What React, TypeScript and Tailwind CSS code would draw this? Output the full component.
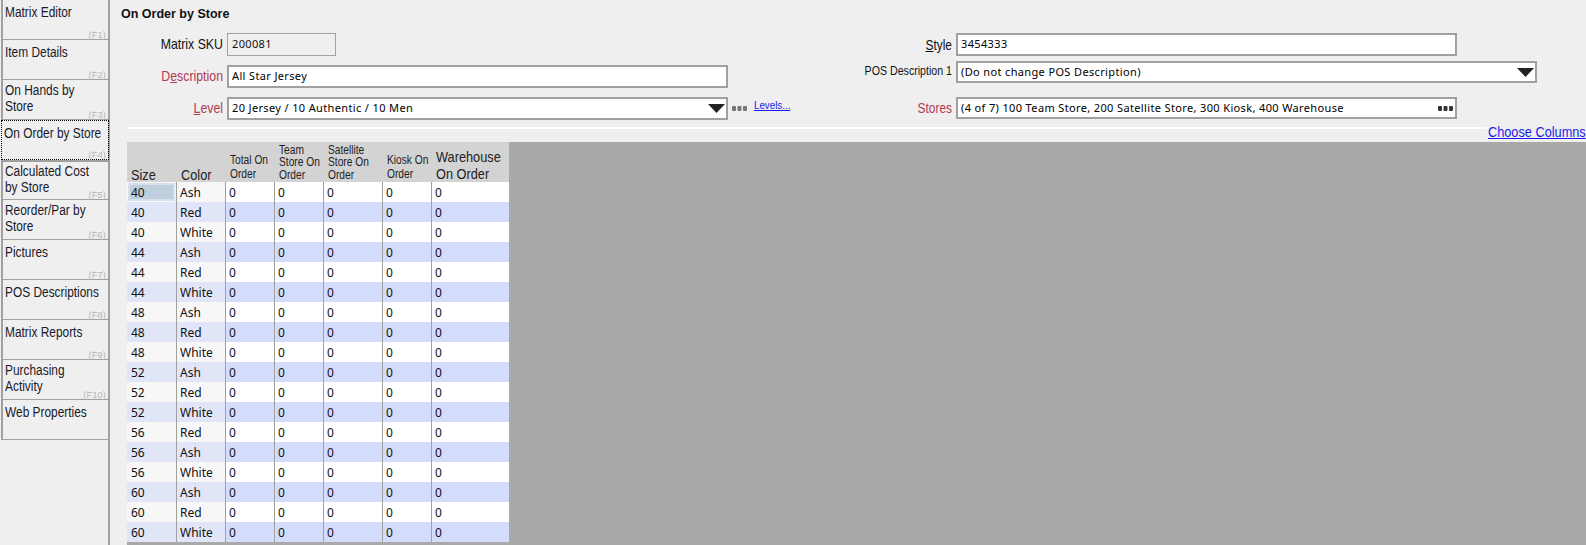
import { clsx } from 'clsx';

const arial = "font-['Liberation_Sans',Arial,sans-serif]";
const data = "font-['Noto_Sans','Open_Sans',sans-serif]";

const navItems = [
  { label: ['Matrix Editor'], key: 'F1' },
  { label: ['Item Details'], key: 'F2' },
  { label: ['On Hands by', 'Store'], key: 'F3' },
  { label: ['On Order by Store'], key: 'F4', active: true },
  { label: ['Calculated Cost', 'by Store'], key: 'F5' },
  { label: ['Reorder/Par by', 'Store'], key: 'F6' },
  { label: ['Pictures'], key: 'F7' },
  { label: ['POS Descriptions'], key: 'F8' },
  { label: ['Matrix Reports'], key: 'F9' },
  { label: ['Purchasing', 'Activity'], key: 'F10' },
  { label: ['Web Properties'], key: '' },
];

const rows = [
  ['40', 'Ash'], ['40', 'Red'], ['40', 'White'],
  ['44', 'Ash'], ['44', 'Red'], ['44', 'White'],
  ['48', 'Ash'], ['48', 'Red'], ['48', 'White'],
  ['52', 'Ash'], ['52', 'Red'], ['52', 'White'],
  ['56', 'Red'], ['56', 'Ash'], ['56', 'White'],
  ['60', 'Ash'], ['60', 'Red'], ['60', 'White'],
];

function Squeezed({ children, right, className }: { children: React.ReactNode; right?: boolean; className?: string }) {
  return (
    <span
      className={clsx(
        'block whitespace-nowrap scale-x-[0.85]',
        arial,
        right ? 'origin-right text-right' : 'origin-left',
        className,
      )}
    >
      {children}
    </span>
  );
}

function Arrow() {
  return (
    <svg className="absolute right-[1px] top-[5px]" width="17" height="9" viewBox="0 0 17 9">
      <path d="M0 0H17L8.5 9Z" fill="#222" />
    </svg>
  );
}

function Dots({ color }: { color: string }) {
  return (
    <svg width="15" height="5" viewBox="0 0 15 5">
      <rect x="0" y="0" width="4" height="5" rx="1" fill={color} />
      <rect x="5.5" y="0" width="4" height="5" rx="1" fill={color} />
      <rect x="11" y="0" width="4" height="5" rx="1" fill={color} />
    </svg>
  );
}

function Field({ value, className, children }: { value: string; className: string; children?: React.ReactNode }) {
  return (
    <div
      className={clsx(
        'relative flex shrink-0 items-center overflow-hidden border-2 border-[#a0a0a0] bg-white pl-[3px] text-[11px] tracking-[0.36px] text-black',
        data,
        className,
      )}
    >
      <span className="whitespace-nowrap">{value}</span>
      {children}
    </div>
  );
}

function Label({ text, under, red, size, className }: { text: string; under?: number; red?: boolean; size: string; className?: string }) {
  return (
    <Squeezed right className={clsx('leading-none', size, red ? 'text-[#b23a55]' : 'text-[#111]', className)}>
      {under === undefined ? text : (
        <>
          {text.slice(0, under)}
          <span className="underline">{text[under]}</span>
          {text.slice(under + 1)}
        </>
      )}
    </Squeezed>
  );
}

function Sidebar() {
  return (
    <div className="flex h-full w-[110px] shrink-0 flex-col border-r-2 border-[#a0a0a0] pl-[1px]">
      {navItems.map((item, i) => (
        <div
          key={item.key || 'web'}
          className={clsx(
            'relative h-[40px] shrink-0 px-[2px] text-[14px] leading-[16px] text-[#1a1a2a]',
            i === 4 ? 'pt-[1px]' : item.label.length > 1 ? 'pt-[2px]' : 'pt-[4px]',
            item.active
              ? 'mr-[-1px] border border-dotted border-black'
              : 'border-b border-l-2 border-[#a0a0a0]',
            i === 4 && 'border-t-2',
          )}
        >
          {item.label.map((line) => (
            <Squeezed key={line}>{line}</Squeezed>
          ))}
          {item.key && (
            <span className={clsx('absolute bottom-[-1px] right-[2px] text-[9.5px] leading-[11px] text-[#b8b8b8]', arial)}>
              ({item.key})
            </span>
          )}
        </div>
      ))}
    </div>
  );
}

function HeaderCell({ width, big, lines }: { width: string; big?: boolean; lines: string[] }) {
  return (
    <div
      className={clsx(
        'flex h-[40px] shrink-0 flex-col justify-end pl-[4px]',
        width,
        big && 'text-[15px] leading-[17px]',
        big && lines.length === 1 && 'translate-y-[1px]',
        !big && 'pb-[1px] text-[12px]',
        !big && (lines.length === 2 ? 'leading-[14px]' : 'leading-[12.5px]'),
      )}
    >
      {lines.map((line) => (
        <Squeezed key={line} className="text-[#222]">{line}</Squeezed>
      ))}
    </div>
  );
}

function Grid() {
  return (
    <div className="flex h-[403px] bg-[#a9a9a9]">
      <div className="w-[382px]">
        <div className="flex bg-[#d3d3d3]">
          <HeaderCell width="w-[50px]" big lines={['Size']} />
          <HeaderCell width="w-[49px]" big lines={['Color']} />
          <HeaderCell width="w-[49px]" lines={['Total On', 'Order']} />
          <HeaderCell width="w-[49px]" lines={['Team', 'Store On', 'Order']} />
          <HeaderCell width="w-[59px]" lines={['Satellite', 'Store On', 'Order']} />
          <HeaderCell width="w-[49px]" lines={['Kiosk On', 'Order']} />
          <HeaderCell width="w-[77px]" big lines={['Warehouse', 'On Order']} />
        </div>
        {rows.map(([size, color], i) => {
          const alt = i % 2 === 1;
          return (
            <div key={i} className={clsx('flex h-[20px] text-[12px] leading-[21px] text-[#111]', data)}>
              <div className={clsx('relative w-[50px] border-r border-[#a0a0a0] pl-[4px]', alt ? 'bg-[#e0e5f7]' : 'bg-[#f7f7f7]')}>
                {i === 0 && <div className="absolute left-[1px] top-[1px] h-[18px] w-[47px] border-2 border-[#d5e0ea] bg-[#c0cfdd]" />}
                <span className="relative">{size}</span>
              </div>
              <div className={clsx('w-[49px] border-r border-[#a0a0a0] pl-[3px]', alt ? 'bg-[#e0e5f7]' : 'bg-[#f7f7f7]')}>{color}</div>
              {['w-[49px]', 'w-[49px]', 'w-[59px]', 'w-[49px]', 'w-[77px]'].map((w, c) => (
                <div key={c} className={clsx('pl-[3px]', w, c < 4 && 'border-r border-[#a0a0a0]', alt ? 'bg-[#d3dcfb]' : 'bg-white')}>0</div>
              ))}
            </div>
          );
        })}
      </div>
    </div>
  );
}

export default function App() {
  return (
    <div className="flex h-[545px] w-[1586px] overflow-hidden bg-[#efefef]">
      <Sidebar />
      <div className="flex min-w-0 flex-1 flex-col pl-[17px]">
        <div className={clsx('-ml-[6px] mt-[6px] h-[16px] text-[12.5px] font-bold leading-[16px] text-[#111]', arial)}>
          On Order by Store
        </div>

        <div className="flex h-[106px]">
          {/* left fields */}
          <div className="flex w-[696px] shrink-0 flex-col pt-[11px]">
            <div className="flex h-[23px] items-center gap-[3px]">
              <div className="w-[97px] pr-[1px]"><Label text="Matrix SKU" size="text-[14.5px]" /></div>
              <div className={clsx('flex h-[23px] w-[109px] items-center border border-[#a0a0a0] pl-[4px] text-[11px] tracking-[0.36px] text-[#111]', data)}>200081</div>
            </div>
            <div className="mt-[9px] flex h-[23px] items-center gap-[3px]">
              <div className="w-[97px] pr-[1px]"><Label text="Description" under={1} red size="text-[14.5px]" /></div>
              <Field value="All Star Jersey" className="h-[23px] w-[501px]" />
            </div>
            <div className="mt-[9px] flex h-[23px] items-center gap-[3px]">
              <div className="w-[97px] pr-[1px]"><Label text="Level" under={0} red size="text-[14.5px]" /></div>
              <Field value="20 Jersey / 10 Authentic / 10 Men" className="h-[23px] w-[501px]"><Arrow /></Field>
              <span className="ml-[1px] flex"><Dots color="#777" /></span>
              <a className="mb-[6px] ml-[4px] w-[44px] text-[11.5px] leading-none text-[#1a1aee] underline">
                <Squeezed>Levels...</Squeezed>
              </a>
            </div>
          </div>

          {/* right fields */}
          <div className="flex flex-1 flex-col pt-[11px]">
            <div className="flex h-[23px] items-center gap-[4px]">
              <div className="w-[129px]"><Label text="Style" under={0} size="text-[14px]" /></div>
              <Field value="3454333" className="h-[23px] w-[501px]" />
            </div>
            <div className="mt-[5px] flex h-[22px] items-center gap-[4px]">
              <div className="w-[129px]"><Label text="POS Description 1" size="text-[12.5px]" className="mb-[2px]" /></div>
              <Field value="(Do not change POS Description)" className="h-[22px] w-[581px]"><Arrow /></Field>
            </div>
            <div className="mt-[14px] flex h-[22px] items-center gap-[4px]">
              <div className="w-[129px]"><Label text="Stores" red size="text-[14px]" /></div>
              <Field value="(4 of 7) 100 Team Store, 200 Satellite Store, 300 Kiosk, 400 Warehouse" className="h-[22px] w-[501px]">
                <span className="absolute right-[2px] top-[7px] flex"><Dots color="#333" /></span>
              </Field>
            </div>
          </div>
        </div>

        {/* divider + choose columns */}
        <div className="flex h-[14px] items-start">
          <div className="mt-[-1px] h-[2px] w-[1360px] shrink-0 bg-white" />
          <a className="ml-[-16px] mt-[-4px] w-[113px] shrink-0 text-[15px] leading-[15px] text-[#1a1aee] underline">
            <Squeezed right>Choose Columns</Squeezed>
          </a>
        </div>

        <Grid />
      </div>
    </div>
  );
}
